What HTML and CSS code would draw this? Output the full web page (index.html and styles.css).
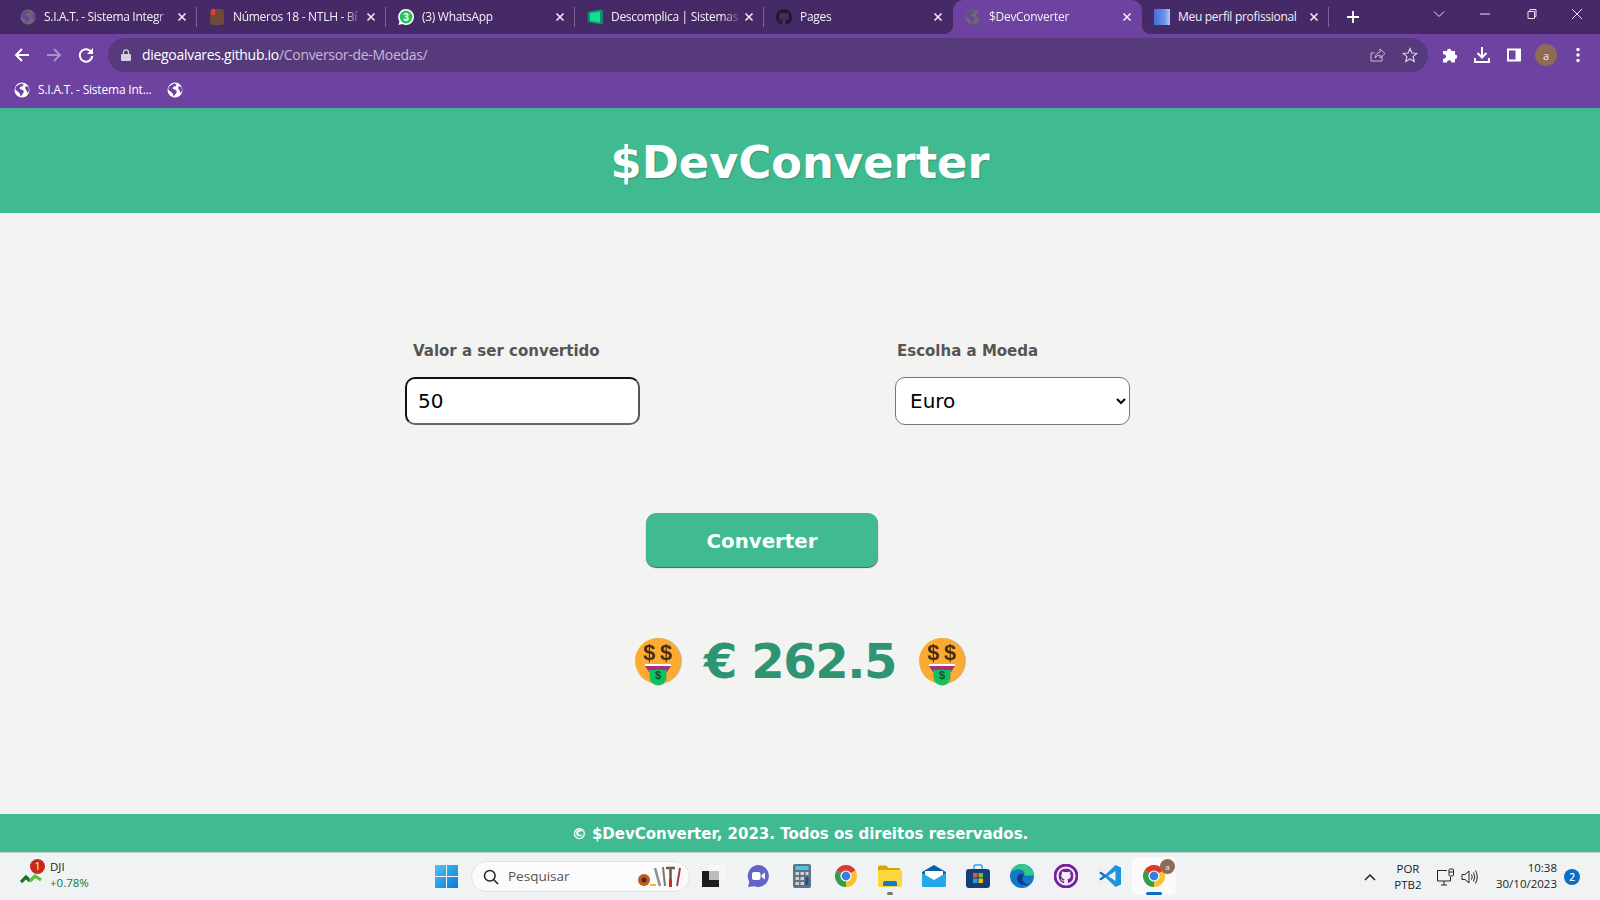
FILE: index.html
```html
<!DOCTYPE html>
<html lang="pt-BR">
<head>
<meta charset="utf-8">
<title>$DevConverter</title>
<link rel="stylesheet" href="styles.css">
</head>
<body>
<svg class="defs" width="0" height="0" aria-hidden="true">
  <symbol id="globe" viewBox="0 0 16 16">
    <circle cx="8" cy="8" r="7.5" fill="currentColor"/>
    <path class="land" d="M2 4.6 5.5 2.2 7.4 1.4 9.6 2.8 8.2 4.6 6.2 4.8 5.6 6.4 7.4 7.6 9.4 8.2 9.8 10.2 8.2 12.4 6.6 14.4 5.8 11.4 3.6 9.4 1.2 7.6ZM11.2 4.6 14.2 4.4 15.2 8.2 13.6 11.2 12.6 8.4 11.4 7Z"/>
  </symbol>
  <symbol id="x" viewBox="0 0 10 10">
    <path d="M1.5 1.5 8.5 8.5M8.5 1.5 1.5 8.5" fill="none" stroke="currentColor" stroke-width="1.6"/>
  </symbol>
  <symbol id="chrome" viewBox="0 0 24 24">
    <path fill="#e0392b" d="M2.47 6.5A11 11 0 0 1 21.53 6.5L12 12Z"/>
    <path fill="#fbc02d" d="M21.53 6.5A11 11 0 0 1 12 23L12 12Z"/>
    <path fill="#2e9f4a" d="M12 23A11 11 0 0 1 2.47 6.5L12 12Z"/>
    <circle cx="12" cy="12" r="5.6" fill="#fff"/>
    <circle cx="12" cy="12" r="4.4" fill="#3b7de0"/>
  </symbol>
  <symbol id="gh" viewBox="0 0 16 16">
    <path d="M8 0C3.58 0 0 3.58 0 8c0 3.54 2.29 6.53 5.47 7.59.4.07.55-.17.55-.38 0-.19-.01-.82-.01-1.49-2.01.37-2.53-.49-2.69-.94-.09-.23-.48-.94-.82-1.13-.28-.15-.68-.52-.01-.53.63-.01 1.08.58 1.23.82.72 1.21 1.87.87 2.33.66.07-.52.28-.87.51-1.07-1.78-.2-3.64-.89-3.64-3.95 0-.87.31-1.59.82-2.15-.08-.2-.36-1.02.08-2.12 0 0 .67-.21 2.2.82.64-.18 1.32-.27 2-.27.68 0 1.36.09 2 .27 1.53-1.04 2.2-.82 2.2-.82.44 1.1.16 1.92.08 2.12.51.56.82 1.27.82 2.15 0 3.07-1.87 3.75-3.65 3.95.29.25.54.73.54 1.48 0 1.07-.01 1.93-.01 2.2 0 .21.15.46.55.38A8.013 8.013 0 0016 8c0-4.42-3.58-8-8-8z"/>
  </symbol>
</svg>

<div class="screen">
  <div class="tabstrip">
    <div class="tab sep">
      <svg class="tab-ico globe-dim"><use href="#globe"/></svg>
      <span class="tab-title">S.I.A.T. - Sistema Integr</span>
      <svg class="tab-x"><use href="#x"/></svg>
    </div>
    <div class="tab sep">
      <svg class="tab-ico" viewBox="0 0 16 16"><rect x="1" width="14" height="16" rx="3" fill="#6f4a36"/><rect x="2.500" width="3.500" height="6" fill="#d9423a"/></svg>
      <span class="tab-title">Números 18 - NTLH - Bí</span>
      <svg class="tab-x"><use href="#x"/></svg>
    </div>
    <div class="tab sep">
      <svg class="tab-ico" viewBox="0 0 16 16"><path d="M8 0a8 8 0 0 1 0 16 8 8 0 0 1-3.800-1L.4 16l1.100-3.600A8 8 0 0 1 8 0Z" fill="#fff"/><circle cx="8" cy="8" r="6.400" fill="#25c35c"/><text x="8" y="11.500" text-anchor="middle" class="wa-num">3</text></svg>
      <span class="tab-title">(3) WhatsApp</span>
      <svg class="tab-x"><use href="#x"/></svg>
    </div>
    <div class="tab sep">
      <svg class="tab-ico" viewBox="0 0 16 16"><path d="M1 3 13 .5Q16 .5 16 3V13Q16 15.500 13 15.500L1 13Q0 8 1 3Z" fill="#148a74"/><path d="M3 4 13 2.500V13.500L3 12Z" fill="#12e08f"/></svg>
      <span class="tab-title">Descomplica | Sistemas</span>
      <svg class="tab-x"><use href="#x"/></svg>
    </div>
    <div class="tab">
      <svg class="tab-ico gh-dark"><use href="#gh"/></svg>
      <span class="tab-title">Pages</span>
      <svg class="tab-x"><use href="#x"/></svg>
    </div>
    <div class="tab active">
      <svg class="tab-ico globe-dim"><use href="#globe"/></svg>
      <span class="tab-title">$DevConverter</span>
      <svg class="tab-x"><use href="#x"/></svg>
    </div>
    <div class="tab sep narrow">
      <svg class="tab-ico" viewBox="0 0 16 16"><defs><linearGradient id="meu"><stop offset="0" stop-color="#3f6fd8"/><stop offset=".65" stop-color="#6b93e6"/><stop offset="1" stop-color="#b6c8ee"/></linearGradient></defs><rect width="16" height="16" fill="url(#meu)"/></svg>
      <span class="tab-title plain">Meu perfil profissional</span>
      <svg class="tab-x"><use href="#x"/></svg>
    </div>
    <svg class="newtab" viewBox="0 0 12 12"><path d="M6 0V12M0 6H12" stroke="#fff" stroke-width="1.800"/></svg>
    <div class="winctl">
      <svg class="wc" viewBox="0 0 12 12"><path d="M1 3.500 6 8.500 11 3.500" fill="none" stroke="#e6e0ee"/></svg>
      <svg class="wc" viewBox="0 0 12 12"><path d="M1 6H11" stroke="#e6e0ee"/></svg>
      <svg class="wc" viewBox="0 0 12 12"><path d="M3 3.500H9.500V10.500H3ZM5 3.500V1.500H11V8.500H9.500" fill="none" stroke="#e6e0ee"/></svg>
      <svg class="wc" viewBox="0 0 12 12"><path d="M1 1 11 11M11 1 1 11" stroke="#e6e0ee"/></svg>
    </div>
  </div>

  <div class="toolbar">
    <svg class="nav-ico" viewBox="0 0 16 16"><path d="M15 8H2M8 2 2 8 8 14" fill="none" stroke="#fff" stroke-width="2"/></svg>
    <svg class="nav-ico" viewBox="0 0 16 16"><path d="M1 8H14M8 2 14 8 8 14" fill="none" stroke="#a98fcb" stroke-width="2"/></svg>
    <svg class="nav-ico" viewBox="0 0 16 16"><path d="M13.500 5.500A6.200 6.200 0 1 0 14.200 9" fill="none" stroke="#fff" stroke-width="2"/><path d="M15 1V7H9Z" fill="#fff"/></svg>
    <div class="omnibox">
      <svg class="lock" viewBox="0 0 10 12"><path d="M2.500 5V3.300a2.500 2.500 0 0 1 5 0V5" fill="none" stroke="#d8d0e2" stroke-width="1.200"/><rect y="5" width="10" height="7" rx="1" fill="#d8d0e2"/></svg>
      <span class="url"><span class="host">diegoalvares.github.io</span><span class="path">/Conversor-de-Moedas/</span></span>
      <svg class="omni-ico" viewBox="0 0 16 16"><path d="M12 8.500V14H1V6H4.500M5 11Q6 5.500 10 5V2L15 6.500 10 11V8Q7 8 5 11Z" fill="none" stroke="#c6b8d8"/></svg>
      <svg class="omni-ico" viewBox="0 0 16 16"><path d="M8 1.500 9.900 6 14.800 6.400 11.100 9.600 12.200 14.400 8 11.900 3.800 14.400 4.900 9.600 1.200 6.400 6.100 6Z" fill="none" stroke="#d6cde2" stroke-width="1.200"/></svg>
    </div>
    <div class="tools">
      <svg class="tool" viewBox="0 0 16 16"><path fill="#fff" d="M1 4H5A2.200 2.200 0 1 1 9.400 4H13V7.500A2.200 2.200 0 1 1 13 12V15.500H9.400A2.200 2.200 0 1 0 5 15.500H1V11.500A2.200 2.200 0 1 0 1 7.500Z"/></svg>
      <svg class="tool" viewBox="0 0 16 16"><path fill="none" stroke="#fff" stroke-width="2" d="M8 0V10M3.500 6 8 10.500 12.500 6M1 11V15H15V11"/></svg>
      <svg class="tool" viewBox="0 0 16 16"><rect x="1" y="1.500" width="14" height="13" fill="#fff"/><rect x="3" y="3.500" width="6.500" height="9" fill="#6d42a0"/></svg>
      <span class="avatar">a</span>
      <svg class="tool" viewBox="0 0 16 16"><circle cx="8" cy="2.500" r="1.700" fill="#fff"/><circle cx="8" cy="8" r="1.700" fill="#fff"/><circle cx="8" cy="13.500" r="1.700" fill="#fff"/></svg>
    </div>
  </div>

  <div class="bookmarks">
    <svg class="bm-ico"><use href="#globe"/></svg>
    <span class="bm-text">S.I.A.T. - Sistema Int...</span>
    <svg class="bm-ico"><use href="#globe"/></svg>
  </div>

  <header class="site-header"><h1>$DevConverter</h1></header>

  <main class="site-main">
    <div class="fields">
      <div class="field">
        <label class="field-label first" for="valor">Valor a ser convertido</label>
        <input class="control focused" id="valor" type="text" value="50">
      </div>
      <div class="field">
        <label class="field-label" for="moeda">Escolha a Moeda</label>
        <select class="control picker" id="moeda"><option>Euro</option><option>Dólar</option></select>
      </div>
    </div>
    <button class="convert" type="button">Converter</button>
    <div class="result">
      <svg class="emoji" viewBox="0 0 46 48">
        <circle cx="23" cy="23" r="23" fill="#fbab2f"/>
        <text x="14.300" y="21.500" text-anchor="middle" class="emoji-dollar">$</text>
        <text x="31" y="21.500" text-anchor="middle" class="emoji-dollar">$</text>
        <rect x="10" y="26" width="26" height="2" fill="#fff"/>
        <path d="M10 28H36L32 34H14Z" fill="#a8307e"/>
        <path d="M14.500 32H31.500V39A8.500 8.500 0 0 1 14.500 39Z" fill="#12bf62"/>
        <text x="23" y="41" text-anchor="middle" class="emoji-dollar-small">$</text>
      </svg>
      <span class="amount">€ 262.5</span>
      <svg class="emoji" viewBox="0 0 46 48">
        <circle cx="23" cy="23" r="23" fill="#fbab2f"/>
        <text x="14.300" y="21.500" text-anchor="middle" class="emoji-dollar">$</text>
        <text x="31" y="21.500" text-anchor="middle" class="emoji-dollar">$</text>
        <rect x="10" y="26" width="26" height="2" fill="#fff"/>
        <path d="M10 28H36L32 34H14Z" fill="#a8307e"/>
        <path d="M14.500 32H31.500V39A8.500 8.500 0 0 1 14.500 39Z" fill="#12bf62"/>
        <text x="23" y="41" text-anchor="middle" class="emoji-dollar-small">$</text>
      </svg>
    </div>
  </main>

  <footer class="site-footer">© $DevConverter, 2023. Todos os direitos reservados.</footer>

  <div class="taskbar">
    <div class="widget">
      <span class="stock-ico">
        <svg viewBox="0 0 22 12" width="22" height="12"><path d="M1 10 6 5 10 9" fill="none" stroke="#17702a" stroke-width="3.200"/><path d="M10 9 15 4 21 8" fill="none" stroke="#5cc23a" stroke-width="3.200"/></svg>
        <span class="badge-red">1</span>
      </span>
      <span class="stock"><span class="stock-name">DJI</span><span class="stock-val">+0.78%</span></span>
    </div>
    <svg class="winlogo" viewBox="0 0 23 23"><defs><linearGradient id="win" x1="0" y1="0" x2="1" y2="1"><stop offset="0" stop-color="#4fc3f7"/><stop offset="1" stop-color="#0a78d4"/></linearGradient></defs><path fill="url(#win)" d="M0 0H11V11H0ZM12 0H23V11H12ZM0 12H11V23H0ZM12 12H23V23H12Z"/></svg>
    <div class="search">
      <svg class="search-ico" viewBox="0 0 16 16"><circle cx="6.800" cy="6.800" r="5.300" fill="none" stroke="#222" stroke-width="1.500"/><path d="M10.500 10.500 15 15" stroke="#222" stroke-width="1.600"/></svg>
      <span class="search-text">Pesquisar</span>
      <svg class="search-art" viewBox="0 0 44 24"><circle cx="6" cy="15" r="6" fill="#c8571b"/><circle cx="6" cy="15" r="2.500" fill="#333"/><path d="M12 20H18" stroke="#d8c23a" stroke-width="2"/><path d="M17 3 22 21" stroke="#8a8f96" stroke-width="2.500"/><path d="M25 2 27 21" stroke="#777" stroke-width="2"/><path d="M28 3H37M32.500 3V22" stroke="#6f5a44" stroke-width="2.500"/><path d="M32.500 14V22" stroke="#c8321f" stroke-width="3"/><path d="M42 3 39 21" stroke="#a0404a" stroke-width="2"/></svg>
    </div>
    <div class="apps">
      <span class="app"><svg class="app-ico" viewBox="0 0 24 22"><rect x="7" width="17" height="15" fill="#f7f7f7"/><rect y="6" width="17" height="16" fill="#1c1c1c"/><rect x="7" y="6" width="10" height="9" fill="#bdbdbd"/></svg></span>
      <span class="app"><svg class="app-ico" viewBox="0 0 24 24"><path d="M12 1a11 11 0 1 1-4 21.300L2 23l1.300-5.300A11 11 0 0 1 12 1Z" fill="#6264c8"/><rect x="6" y="8" width="8.500" height="8" rx="2" fill="#fff"/><path d="M15.500 11 19 8.500V15.500L15.500 13Z" fill="#fff"/></svg></span>
      <span class="app"><svg class="app-ico" viewBox="0 0 18 24"><rect width="18" height="24" rx="2" fill="#63727e"/><rect x="2.500" y="2" width="13" height="4" fill="#4cc4ee"/><path d="M2.500 8H6V11H2.500ZM7.500 8H11V11H7.500ZM12.500 8H15.500V11H12.500ZM2.500 13H6V16H2.500ZM7.500 13H11V16H7.500ZM2.500 18H6V21H2.500ZM7.500 18H11V21H7.500Z" fill="#c9d3da"/><rect x="12.500" y="13" width="3" height="8" fill="#1f4f9c"/></svg></span>
      <span class="app"><svg class="app-ico"><use href="#chrome"/></svg></span>
      <span class="app folder"><svg class="app-ico" viewBox="0 0 24 22"><path d="M0 2A1.500 1.500 0 0 1 1.500 .5H8L10.500 3H22V8H0Z" fill="#d9a400"/><rect y="5" width="24" height="17" rx="1.500" fill="#fcd53f"/><path d="M5 21V18A2 2 0 0 1 7 16H17A2 2 0 0 1 19 18V21Z" fill="#0f7bd0"/></svg></span>
      <span class="app"><svg class="app-ico" viewBox="0 0 24 22"><path d="M0 7 12 0 24 7V9L12 16 0 9Z" fill="#0a5ea8"/><path d="M3 6H21V11L12 16 3 11Z" fill="#fff"/><path d="M0 8 12 15 24 8V20.500A1.500 1.500 0 0 1 22.500 22H1.500A1.500 1.500 0 0 1 0 20.500Z" fill="#26a6ea"/></svg></span>
      <span class="app"><svg class="app-ico" viewBox="0 0 24 24"><path d="M8 6V2.500A1.500 1.500 0 0 1 9.500 1H14.500A1.500 1.500 0 0 1 16 2.500V6" fill="none" stroke="#27a9e8" stroke-width="1.500"/><rect y="5" width="24" height="19" rx="3" fill="#123f7a"/><rect x="7" y="9" width="4.500" height="4.500" fill="#e8552d"/><rect x="12.500" y="9" width="4.500" height="4.500" fill="#7fba2c"/><rect x="7" y="14.500" width="4.500" height="4.500" fill="#1ba5e8"/><rect x="12.500" y="14.500" width="4.500" height="4.500" fill="#fdb913"/></svg></span>
      <span class="app"><svg class="app-ico" viewBox="0 0 24 24"><circle cx="12" cy="12" r="12" fill="#1478c4"/><path d="M24 13C24 6 18.500 0 12 0 6 0 2 3.500 .8 9 3 5.800 7 5 10 5.500 14 6.200 15.500 9 14 11.500H24Z" fill="#2fcb8a"/><path d="M14 11C12 8.500 7.500 9.500 7 14 6.500 19 12 23 19 20.500 15 20 12 17 12.500 14.500 12.700 13 13.500 12 14 11Z" fill="#0b3f8a"/></svg></span>
      <span class="app"><svg class="app-ico" viewBox="0 0 24 24"><circle cx="12" cy="12" r="11" fill="none" stroke="#7a1f9e" stroke-width="2.800"/><circle cx="12" cy="12" r="9" fill="#f0f0f0"/><svg x="4.500" y="4.500" width="15" height="15" viewBox="0 0 16 16" class="gh-purple"><use href="#gh"/></svg></svg></span>
      <span class="app"><svg class="app-ico" viewBox="0 0 24 24"><path d="M17.500 1 23 3.500V20.500L17.500 23 7 13V11Z" fill="#1b93dd"/><path d="M17.500 7 10 12 17.500 17Z" fill="#f0f0f0"/><path d="M3 7.500 1 9 5 12 1 15 3 16.500 9 12Z" fill="#1273c4"/></svg></span>
      <span class="app current">
        <svg class="app-ico"><use href="#chrome"/></svg>
        <span class="app-avatar">a</span>
      </span>
    </div>
    <div class="tray">
      <svg class="tray-chev" viewBox="0 0 12 8"><path d="M1 7 6 2 11 7" fill="none" stroke="#222" stroke-width="1.500"/></svg>
      <span class="lang"><span>POR</span><span>PTB2</span></span>
      <svg class="tray-net" viewBox="0 0 20 18"><path d="M11 2.500H1.500V13H14.500V9M5 17H11M8 13V17" fill="none" stroke="#222"/><rect x="13" y="1" width="4.500" height="7" rx="1" fill="none" stroke="#222"/><path d="M13 4H17.500" stroke="#222"/></svg>
      <svg class="tray-vol" viewBox="0 0 18 16"><path d="M1 5.500H4L8 2V14L4 10.500H1Z" fill="none" stroke="#222"/><path d="M10.500 5.500Q12 8 10.500 10.500M12.500 3.500Q15 8 12.500 12.500M14.500 1.500Q18 8 14.500 14.500" fill="none" stroke="#222"/></svg>
      <span class="clock"><span>10:38</span><span>30/10/2023</span></span>
      <span class="notif">2</span>
    </div>
  </div>
</div>
</body>
</html>
```
FILE: styles.css
```css
* { box-sizing: border-box; }
html, body { margin: 0; padding: 0; height: 100%; overflow: hidden; }
body { font-family: "Open Sans", "Noto Sans", sans-serif; background: #f3f3f1; }
.defs { position: absolute; }
.land { fill: #6d42a0; }
.emoji-dollar { font: 700 22px "Liberation Sans", sans-serif; fill: #4a2c16; }
.emoji-dollar-small { font: 700 11px "Liberation Sans", sans-serif; fill: #0c4a2a; }
.wa-num { font: 700 10px "Liberation Sans", sans-serif; fill: #fff; }

.screen { height: 900px; display: flex; flex-direction: column; }

/* tab strip */
.tabstrip { height: 34px; flex: none; background: #452a67; display: flex; padding-left: 8px; color: #fff; }
.tab { width: 189px; height: 34px; display: flex; align-items: center; padding: 0 10px 0 12px; gap: 8px; position: relative; }
.tab.narrow { width: 187px; }
.tab.sep::after { content: ""; position: absolute; right: 0; top: 7px; height: 20px; width: 1px; background: #7c6596; }
.tab.active { background: #6d42a0; border-radius: 10px 10px 0 0; }
.tab.active::before, .tab.active::after { content: ""; position: absolute; bottom: 0; width: 8px; height: 8px; }
.tab.active::before { left: -8px; background: radial-gradient(circle at 0 0, transparent 7.5px, #6d42a0 8px); }
.tab.active::after { right: -8px; background: radial-gradient(circle at 100% 0, transparent 7.5px, #6d42a0 8px); }
.tab-ico { width: 16px; height: 16px; flex: none; color: #dcdcdc; }
.globe-dim { color: #6a6a70; }
.gh-dark { fill: #1d1a24; }
.gh-purple { fill: #7a1f9e; }
.tab-title { flex: 1; min-width: 0; margin-bottom: 2px; white-space: nowrap; overflow: hidden; font-size: 12px; letter-spacing: -0.3px; color: #f4f0f8; -webkit-mask-image: linear-gradient(to right, #000 85%, transparent 100%); mask-image: linear-gradient(to right, #000 85%, transparent 100%); }
.tab-title.plain { -webkit-mask-image: none; mask-image: none; }
.tab-x { width: 10px; height: 10px; margin-left: -6px; flex: none; color: #f0ecf4; }
.newtab { width: 12px; height: 12px; margin: 11px 0 0 18px; flex: none; }
.winctl { margin-left: auto; display: flex; height: 28px; align-items: center; padding-right: 17px; gap: 34px; }
.wc { width: 12px; height: 12px; display: block; }

/* toolbar */
.toolbar { height: 38px; flex: none; background: #6d42a0; display: flex; align-items: flex-end; padding-left: 14px; }
.nav-ico { width: 16px; height: 16px; margin: 0 16px 9px 0; flex: none; }
.omnibox { width: 1320px; height: 34px; margin-left: -2px; background: #563a7b; border-radius: 17px; display: flex; align-items: center; padding: 0 10px 0 13px; }
.lock { width: 10px; height: 12px; flex: none; }
.url { margin: 0 0 2px 11px; font-size: 14px; letter-spacing: -0.3px; white-space: nowrap; flex: 1; }
.host { color: #fff; }
.path { color: #c6b8d8; }
.omni-ico { width: 16px; height: 16px; margin-left: 16px; flex: none; }
.tools { display: flex; align-items: center; height: 34px; padding-left: 14px; gap: 16px; }
.tool { width: 16px; height: 16px; flex: none; }
.avatar { width: 22px; height: 22px; margin: 0 -3px; border-radius: 50%; background: #8d6b56; color: #f5eee8; font-size: 11px; display: flex; align-items: center; justify-content: center; flex: none; }

/* bookmarks */
.bookmarks { height: 36px; flex: none; background: #6d42a0; display: flex; align-items: center; padding: 0 0 0 14px; color: #fff; }
.bm-ico { width: 16px; height: 16px; flex: none; }
.bm-text { font-size: 12px; letter-spacing: -0.2px; margin: 0 15px 2px 8px; white-space: nowrap; }

/* site */
.site-header { height: 105px; flex: none; padding-top: 4px; background: #3fba91; display: flex; align-items: center; justify-content: center; }
.site-header h1 { margin: 0; font: 700 44.8px "DejaVu Sans", Verdana, sans-serif; color: #fff; text-shadow: 1px 1px 1px rgba(0, 0, 0, .2); }

.site-main { flex: 1; min-height: 0; padding-top: 128px; font-family: "DejaVu Sans", Verdana, sans-serif; }
.fields { width: 725px; margin-left: 405px; display: flex; justify-content: space-between; }
.field { width: 235px; display: flex; flex-direction: column; gap: 16px; }
.field-label { font-size: 15px; font-weight: 700; line-height: 20px; color: #555; padding-left: 2px; }
.field-label.first { padding-left: 8px; }
.control { width: 100%; height: 48px; border: 1px solid #767676; border-radius: 10px; background: #fff; color: #000; font: 20px "DejaVu Sans", Verdana, sans-serif; padding: 0 0 0 11px; outline: none; }
.control.picker { padding-left: 10px; }
.control.focused { border: 2px solid #111; border-right-color: #555; border-bottom-color: #666; padding-left: 11px; }
.convert { display: block; width: 232px; height: 54px; margin: 88px 0 0 646px; padding: 2px 0 0; background: #3fba91; border: 0; border-radius: 10px; box-shadow: 0 1px 1px #555; color: #fff; font: 700 19.8px "DejaVu Sans", Verdana, sans-serif; }
.result { margin-top: 71px; display: flex; justify-content: center; align-items: flex-start; gap: 23px; height: 48px; }
.emoji { width: 46px; height: 48px; flex: none; filter: drop-shadow(1px 0 0 rgba(120, 100, 60, .4)); }
.amount { font-size: 48px; font-weight: 700; line-height: 46px; letter-spacing: -1.4px; color: #2f9473; white-space: nowrap; }

.site-footer { height: 39px; flex: none; background: #3fba91; border-bottom: 1px solid #c8d0cc; color: #fff; font: 700 15px/41px "DejaVu Sans", Verdana, sans-serif; text-align: center; }

/* taskbar */
.taskbar { height: 47px; flex: none; background: #f1f2f3; display: flex; align-items: center; }
.widget { width: 435px; padding-left: 20px; display: flex; align-items: center; flex: none; }
.stock-ico { width: 22px; height: 30px; padding-bottom: 8px; display: flex; align-items: flex-end; position: relative; margin-right: 8px; }
.badge-red { position: absolute; top: -3px; left: 10px; width: 15px; height: 15px; border-radius: 50%; background: #c42b1c; color: #fff; font-size: 10px; line-height: 15px; text-align: center; }
.stock { display: flex; flex-direction: column; font-size: 11.5px; line-height: 16px; margin-bottom: 3px; }
.stock-name { color: #222; }
.stock-val { color: #14791f; }
.winlogo { width: 23px; height: 23px; margin-right: 13px; flex: none; }
.search { width: 219px; height: 31px; background: #fbfbfb; border: 1px solid #e2e2e2; border-radius: 16px; display: flex; align-items: center; padding: 0 7px 0 11px; flex: none; }
.search-ico { width: 16px; height: 16px; flex: none; }
.search-text { margin: 0 0 2px 9px; font-size: 13.5px; color: #555; flex: 1; }
.search-art { width: 44px; height: 24px; flex: none; }
.apps { display: flex; flex: none; margin-left: 2px; margin-bottom: 1px; }
.app { width: 44px; height: 38px; display: flex; align-items: center; justify-content: center; position: relative; flex: none; }
.app-ico { width: 24px; height: 24px; }
.folder::after { content: ""; position: absolute; bottom: 0; left: 19px; width: 6px; height: 3px; border-radius: 2px; background: #777; }
.current { background: #fafafa; border-radius: 5px; }
.current::after { content: ""; position: absolute; bottom: 0; left: 14px; width: 16px; height: 3px; border-radius: 2px; background: #0a6fc4; }
.app-avatar { position: absolute; top: 2px; right: 1px; width: 15px; height: 15px; border-radius: 50%; background: #8d6b56; color: #f5eee8; font-size: 8px; line-height: 15px; text-align: center; }
.tray { margin-left: auto; display: flex; align-items: center; padding-right: 20px; color: #222; font-size: 11.5px; line-height: 16px; }
.tray-chev { width: 12px; height: 8px; margin-right: 17px; }
.lang { width: 30px; display: flex; flex-direction: column; align-items: center; margin-right: 13px; }
.tray-net { width: 20px; height: 18px; margin-right: 5px; }
.tray-vol { width: 18px; height: 16px; margin-right: 17px; }
.clock { display: flex; flex-direction: column; align-items: flex-end; margin: 0 7px 2px 0; }
.notif { width: 16px; height: 16px; border-radius: 50%; background: #0a6fc4; color: #fff; font-size: 10px; font-weight: 600; line-height: 16px; text-align: center; }
```
